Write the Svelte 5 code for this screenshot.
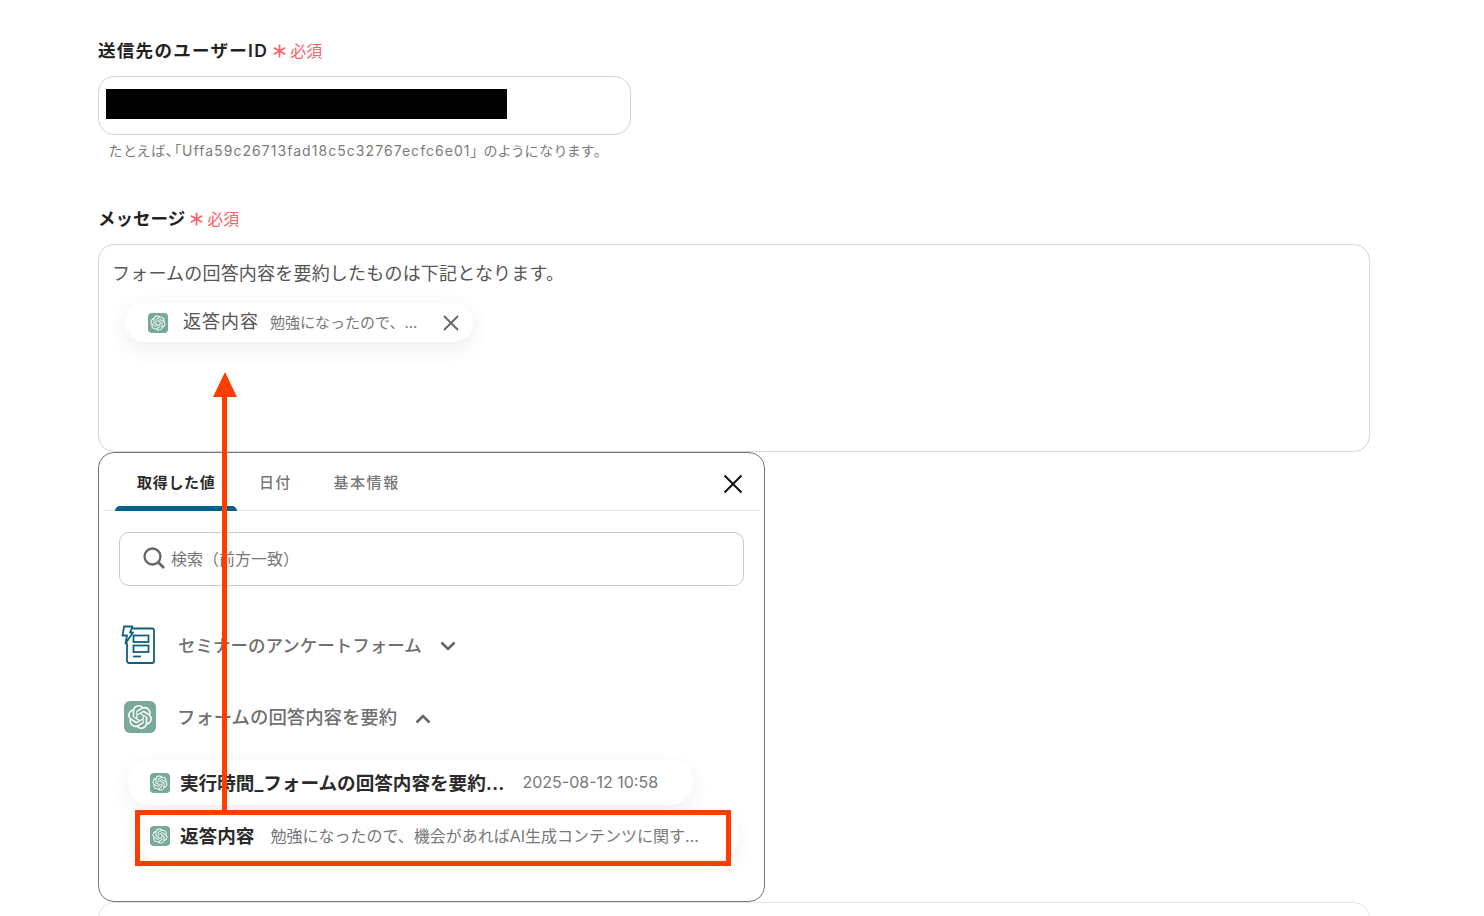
<script>
  const gpt = "M22.2819 9.8211a5.9847 5.9847 0 0 0-.5157-4.9108 6.0462 6.0462 0 0 0-6.5098-2.9A6.0651 6.0651 0 0 0 4.9807 4.1818a5.9847 5.9847 0 0 0-3.9977 2.9 6.0462 6.0462 0 0 0 .7427 7.0966 5.98 5.98 0 0 0 .511 4.9107 6.051 6.051 0 0 0 6.5146 2.9001A5.9847 5.9847 0 0 0 13.2599 24a6.0557 6.0557 0 0 0 5.7718-4.2058 5.9894 5.9894 0 0 0 3.9977-2.9001 6.0557 6.0557 0 0 0-.7475-7.0729zm-9.022 12.6081a4.4755 4.4755 0 0 1-2.8764-1.0408l.1419-.0804 4.7783-2.7582a.7948.7948 0 0 0 .3927-.6813v-6.7369l2.02 1.1686a.071.071 0 0 1 .038.052v5.5826a4.504 4.504 0 0 1-4.4945 4.4944zm-9.6607-4.1254a4.4708 4.4708 0 0 1-.5346-3.0137l.142.0852 4.783 2.7582a.7712.7712 0 0 0 .7806 0l5.8428-3.3685v2.3324a.0804.0804 0 0 1-.0332.0615L9.74 19.9502a4.4992 4.4992 0 0 1-6.1408-1.6464zM2.3408 7.8956a4.485 4.485 0 0 1 2.3655-1.9728V11.6a.7664.7664 0 0 0 .3879.6765l5.8144 3.3543-2.0201 1.1685a.0757.0757 0 0 1-.071 0l-4.8303-2.7865A4.504 4.504 0 0 1 2.3408 7.872zm16.5963 3.8558L13.1038 8.364 15.1192 7.2a.0757.0757 0 0 1 .071 0l4.8303 2.7913a4.4944 4.4944 0 0 1-.6765 8.1042v-5.6772a.79.79 0 0 0-.407-.667zm2.0107-3.0231l-.142-.0852-4.7735-2.7818a.7759.7759 0 0 0-.7854 0L9.409 9.2297V6.8974a.0662.0662 0 0 1 .0284-.0615l4.8303-2.7866a4.4992 4.4992 0 0 1 6.6802 4.66zM8.3065 12.863l-2.02-1.1638a.0804.0804 0 0 1-.038-.0567V6.0742a4.4992 4.4992 0 0 1 7.3757-3.4537l-.142.0805L8.704 5.459a.7948.7948 0 0 0-.3927.6813zm1.0976-2.3654l2.602-1.4998 2.6069 1.4998v2.9994l-2.5974 1.4997-2.6067-1.4997Z";
</script>

{#snippet gptIcon(size)}
  <svg class="gpt" width={size} height={size} viewBox="0 0 32 32" aria-hidden="true">
    <rect width="32" height="32" rx="6" fill="#78a99b" />
    <g transform="translate(4 4)"><path d={gpt} fill="#fff" /></g>
  </svg>
{/snippet}

{#snippet required()}
  <svg class="star" width="13" height="14" viewBox="0 0 13 14" aria-hidden="true">
    <path d="M6.5 .5v13M.8 3.7l11.400 6.600M12.200 3.700L.8 10.300" stroke="#f8636b" stroke-width="1.7" fill="none" />
  </svg>
  <span class="req">必須</span>
{/snippet}

<div class="page">
  <section class="field first">
    <div class="label"><span class="label-text wide">送信先のユーザーID</span>{@render required()}</div>
    <div class="input">
      <div class="redacted"></div>
    </div>
    <p class="hint">たとえば、「<span class="hint-id">Uffa59c26713fad18c5c32767ecfc6e01</span>」<span class="hint-tail">のようになります。</span></p>
  </section>

  <section class="field second">
    <div class="label"><span class="label-text">メッセージ</span>{@render required()}</div>
    <div class="textarea">
      <p class="msg">フォームの回答内容を要約したものは下記となります。</p>
      <div class="chip">
        {@render gptIcon(20)}
        <span class="chip-name">返答内容</span>
        <span class="chip-value">勉強になったので、...</span>
        <svg class="chip-x" width="18" height="18" viewBox="0 0 18 18" aria-hidden="true">
          <path d="M2 2l14 14M16 2L2 16" stroke="#666" stroke-width="1.8" fill="none" />
        </svg>
      </div>
    </div>

    <div class="popover">
      <div class="tabs">
        <div class="tab active">取得した値</div>
        <div class="tab">日付</div>
        <div class="tab">基本情報</div>
        <svg class="close" width="20" height="20" viewBox="0 0 20 20" aria-hidden="true">
          <path d="M1.5 1.5l17 17M18.5 1.5l-17 17" stroke="#111" stroke-width="2" fill="none" />
        </svg>
      </div>

      <div class="search">
        <svg width="24" height="24" viewBox="0 0 24 24" aria-hidden="true">
          <circle cx="10.5" cy="10.5" r="8" stroke="#666" stroke-width="2.3" fill="none" />
          <path d="M16.5 16.5l5.5 5.500" stroke="#666" stroke-width="2.800" fill="none" />
        </svg>
        <span>検索（前方一致）</span>
      </div>

      <div class="group g1">
        <svg class="form-icon" width="34" height="39" viewBox="0 0 34 39" aria-hidden="true">
          <path d="M11 3.500h20a2 2 0 0 1 2 2V36a2 2 0 0 1-2 2H8a2 2 0 0 1-2-2V18" stroke="#11607f" stroke-width="1.800" fill="none" />
          <path d="M3 1.500h8.500L9 7.500h3L4.500 18.500l1.500-8H1.500z" fill="#fff" stroke="#11607f" stroke-width="1.800" stroke-linejoin="round" />
          <rect x="12.500" y="10.500" width="15" height="6.500" stroke="#11607f" stroke-width="1.800" fill="none" />
          <rect x="12.500" y="20.500" width="15" height="6.500" stroke="#11607f" stroke-width="1.800" fill="none" />
          <path d="M12 31.500h8" stroke="#11607f" stroke-width="1.800" />
        </svg>
        <span class="group-name">セミナーのアンケートフォーム</span>
        <svg class="chev" width="16" height="10" viewBox="0 0 16 10" aria-hidden="true">
          <path d="M1.500 1.500L8 8l6.500-6.500" stroke="#666" stroke-width="2.600" fill="none" />
        </svg>
      </div>

      <div class="group g2">
        <span class="gpt-wrap">{@render gptIcon(32)}</span>
        <span class="group-name">フォームの回答内容を要約</span>
        <svg class="chev" width="16" height="10" viewBox="0 0 16 10" aria-hidden="true">
          <path d="M1.500 8.500L8 2l6.500 6.500" stroke="#666" stroke-width="2.600" fill="none" />
        </svg>
      </div>

      <div class="pill p1">
        {@render gptIcon(20)}
        <span class="pill-name">実行時間_フォームの回答内容を要約...</span>
        <span class="pill-value time">2025-08-12 10:58</span>
      </div>
      <div class="pill p2">
        {@render gptIcon(20)}
        <span class="pill-name">返答内容</span>
        <span class="pill-value">勉強になったので、機会があればAI生成コンテンツに関す...</span>
      </div>
    </div>
  </section>

  <section class="next-field"></section>

  <!-- annotation drawn on top of the screenshot -->
  <div class="mark-box"></div>
  <svg class="mark-arrow" width="24" height="440" viewBox="0 0 24 440" aria-hidden="true">
    <path d="M12 0L24 25H14V438H9V25H0z" fill="#ff3d00" />
  </svg>
</div>

<style>
  :global(body) {
    margin: 0;
    background: #fff;
  }

  .page {
    position: relative;
    box-sizing: border-box;
    height: 916px;
    overflow: hidden;
    padding: 39px 114px 0 98px;
    font-family: Inter, "Noto Sans CJK JP", sans-serif;
    color: #2b2b2b;
  }

  .label {
    display: flex;
    align-items: center;
    height: 20px;
    color: #222;
  }
  .label-text {
    font-size: 17.500px;
    font-weight: 600;
  }
  .label-text.wide {
    letter-spacing: 1.300px;
  }
  .star {
    margin: 4px 4px 0 5px;
  }
  .req {
    margin-top: 2px;
    font-size: 16px;
    font-weight: 400;
    color: #f8636b;
  }

  .input {
    box-sizing: border-box;
    width: 533px;
    height: 59px;
    margin-top: 17px;
    padding: 12px 7px;
    border: 1px solid #d3d3dc;
    border-radius: 16px;
  }
  .redacted {
    width: 401px;
    height: 30px;
    background: #000;
  }
  .hint {
    margin: 7px 0 0 11px;
    font-size: 14px;
    line-height: 18px;
    letter-spacing: 1.100px;
    font-feature-settings: "palt";
    color: #7a7a7a;
  }
  .hint-id {
    letter-spacing: 1.050px;
  }
  .hint-tail {
    margin-left: 5px;
    letter-spacing: 1.200px;
  }

  .second {
    position: relative;
    margin-top: 47px;
  }
  .textarea {
    box-sizing: border-box;
    height: 208px;
    margin-top: 17px;
    padding: 17px 13px;
    border: 1px solid #d3d5e2;
    border-radius: 16px;
  }
  .msg {
    margin: 0;
    font-size: 18px;
    line-height: 24px;
    letter-spacing: 0.2px;
    color: #555;
  }
  .chip {
    display: flex;
    align-items: center;
    box-sizing: border-box;
    width: 348px;
    height: 39px;
    margin: 17px 0 0 13px;
    padding-left: 23px;
    border-radius: 20px;
    background: #fff;
    box-shadow: 0 6px 20px rgba(70, 70, 110, 0.1);
  }
  .chip-name {
    margin: 0 0 5px 15px;
    font-size: 18px;
    letter-spacing: 1px;
    color: #555;
  }
  .chip-value {
    margin: 0 0 2px 11px;
    font-size: 15px;
    color: #777;
  }
  .chip-x {
    margin-left: 25px;
  }
  .gpt {
    flex: none;
    display: block;
  }

  .popover {
    position: absolute;
    top: 245px;
    left: 0;
    z-index: 2;
    box-sizing: border-box;
    width: 667px;
    height: 450px;
    border: 1px solid #77777c;
    border-radius: 16px;
    background: #fff;
  }
  .tabs {
    position: relative;
    display: flex;
    height: 57px;
    margin: 0 4px;
    padding-left: 12px;
    border-bottom: 1px solid #e4e4e6;
  }
  .tab {
    padding: 21px 22px 0;
    font-size: 15px;
    line-height: 18px;
    letter-spacing: 1.200px;
    font-weight: 500;
    white-space: nowrap;
    color: #777;
  }
  .tab.active {
    position: relative;
    box-sizing: border-box;
    width: 122px;
    padding-right: 0;
    letter-spacing: 0.7px;
    font-weight: 700;
    color: #2b2b2b;
  }
  .tab.active::after {
    content: "";
    position: absolute;
    left: 0;
    right: 0;
    bottom: -1px;
    height: 5px;
    border-radius: 5px 5px 0 0;
    background: #00618a;
  }
  .tab:nth-child(3) {
    padding-left: 20px;
    letter-spacing: 1.600px;
  }
  .close {
    position: absolute;
    top: 21px;
    right: 17px;
  }
  .search {
    display: flex;
    align-items: center;
    gap: 5px;
    box-sizing: border-box;
    width: 625px;
    height: 54px;
    margin: 21px 0 0 20px;
    padding-left: 22px;
    border: 1px solid #c9c9cb;
    border-radius: 10px;
    font-size: 16px;
    color: #777;
  }
  .search > * {
    margin-bottom: 2px;
  }
  .group {
    display: flex;
    align-items: center;
    font-size: 17.500px;
    font-weight: 500;
    color: #6f6f6f;
  }
  .g1 {
    height: 40px;
    margin-top: 38px;
    padding-left: 22px;
  }
  .g2 {
    height: 40px;
    margin-top: 33px;
    padding-left: 25px;
    font-size: 18.400px;
  }
  .group-name {
    margin: 0 18px 0 23px;
  }
  .g2 .group-name {
    margin: 0 18px 2px 21px;
  }
  .chev {
    margin-top: 3px;
  }
  .gpt-wrap {
    display: block;
  }
  .pill {
    display: flex;
    align-items: center;
    box-sizing: border-box;
    border-radius: 22px;
    background: #fff;
    box-shadow: 0 6px 20px rgba(70, 70, 110, 0.08);
  }
  .p1 {
    width: 565px;
    height: 45px;
    margin: 23px 0 0 29px;
    padding-left: 22px;
  }
  .p2 {
    width: 605px;
    height: 47px;
    margin: 7px 0 0 34px;
    padding-left: 17px;
  }
  .pill-name {
    margin: 0 0 2px 10px;
    font-size: 18.600px;
    font-weight: 700;
    color: #2b2b2b;
  }
  .pill-value {
    margin: 0 0 2px 16px;
    font-size: 16px;
    color: #777;
    white-space: nowrap;
  }
  .time {
    margin-left: 18px;
  }

  .next-field {
    height: 60px;
    margin-top: 450px;
    border: 1px solid #e4e4ea;
    border-radius: 16px;
  }

  .mark-box {
    position: absolute;
    top: 810px;
    left: 135px;
    z-index: 3;
    box-sizing: border-box;
    width: 596px;
    height: 56px;
    border: 5px solid #ff3d00;
  }
  .mark-arrow {
    position: absolute;
    top: 372px;
    left: 213px;
    z-index: 3;
  }
</style>
